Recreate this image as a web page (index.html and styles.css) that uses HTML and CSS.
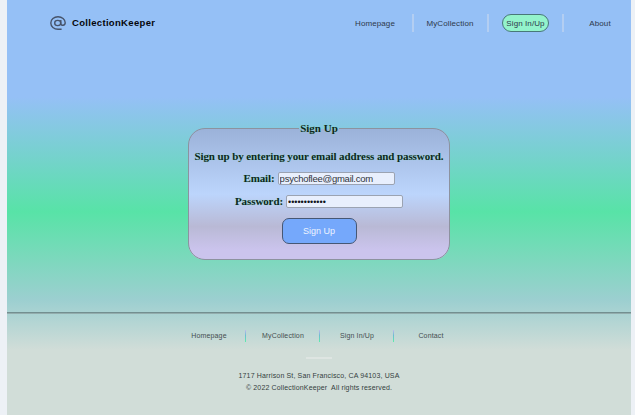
FILE: index.html
```html
<!DOCTYPE html>
<html lang="en">
<head>
<meta charset="utf-8">
<title>CollectionKeeper</title>
<link rel="stylesheet" href="styles.css">
</head>
<body>
<div class="page">
  <header class="header">
    <a class="brand">
      <svg class="logo" viewBox="0 0 16 14" fill="none" stroke="#46536a" stroke-width="1.4">
        <ellipse cx="7.7" cy="7" rx="3" ry="2.6"/>
        <path d="M10.8 4V7.6C10.8 10 15.2 10 15.2 6.8C15.2 3.3 12 .8 8 .8S.8 3.5.8 7S4 13.2 8 13.2H11.6"/>
      </svg>
      <span>CollectionKeeper</span>
    </a>
    <nav class="nav">
      <a><span>Homepage</span></a>
      <a><span>MyCollection</span></a>
      <a><span class="active">Sign In/Up</span></a>
      <a><span>About</span></a>
    </nav>
  </header>
  <main class="main">
    <fieldset class="card">
      <legend>Sign Up</legend>
      <p class="intro">Sign up by entering your email address and password.</p>
      <div class="row email"><label for="email">Email:</label><input id="email" type="text" value="psychoflee@gmail.com"></div>
      <div class="row"><label for="password">Password:</label><input id="password" type="password" value="abcdefghijkl"></div>
      <button class="submit">Sign Up</button>
    </fieldset>
  </main>
  <footer class="footer">
    <nav class="links">
      <a>Homepage</a>
      <a>MyCollection</a>
      <a>Sign In/Up</a>
      <a>Contact</a>
    </nav>
    <div class="dash"></div>
    <p>1717 Harrison St, San Francisco, CA 94103, USA</p>
    <p class="copy">© 2022 CollectionKeeper&nbsp; All rights reserved.</p>
  </footer>
</div>
</body>
</html>
```
FILE: styles.css
```css
* { box-sizing: border-box; }
body {
  margin: 0;
  background: #edf1f6;
  font-family: "Liberation Sans", Arial, sans-serif;
  overflow: hidden;
}
.page {
  width: 624px;
  height: 415px;
  margin-left: 7px;
  display: flex;
  flex-direction: column;
  background: linear-gradient(#95c0f6 0, #95c0f6 97px, #58e3a7 212px, #9ccfd0 300px, #d1ddd8 350px, #d1ddd8 100%);
}
.header {
  height: 46px;
  display: flex;
  align-items: center;
  justify-content: space-between;
  padding-left: 43px;
}
.brand {
  display: flex;
  align-items: center;
  gap: 6px;
  color: #05070c;
  font-size: 9.5px;
  font-weight: bold;
  letter-spacing: .32px;
}
.brand span { margin-top: -1px; }
.logo { width: 16px; height: 14px; }
.nav {
  display: grid;
  grid-template-columns: 75px 75px 75px 67px;
  font-size: 8px;
  letter-spacing: .1px;
  color: #2d394b;
}
.nav a {
  height: 18px;
  display: flex;
  align-items: center;
  justify-content: center;
  padding-right: 1px;
  border-right: 2px solid #b3cef2;
}
.nav a:last-child { border: 0; padding: 0 0 0 5px; }
.nav a:nth-child(3) { padding: 0; }
.active {
  width: 47px;
  height: 18px;
  line-height: 17px;
  text-align: center;
  border: 1px solid #487878;
  border-radius: 9px;
  background: #93f3cb;
}
.main { height: 266px; padding: 76px 0 0 181px; }
.card {
  width: 262px;
  height: 138px;
  margin: 0;
  padding: 0;
  border: 1px solid #8c929f;
  border-radius: 17px;
  background: linear-gradient(#9bb2d9, #bcd5fc 50%, #b9b9d5 75%, #cbc4ed 93%);
  text-align: center;
  font: bold 11px "Liberation Serif", "Times New Roman", serif;
  letter-spacing: -.1px;
  color: #0e261f;
  text-shadow: 0 0 1px #8de4bf;
}
.card legend { margin: 0 auto; padding: 0 1px; height: 12px; line-height: 12px; letter-spacing: 0; }
.intro { margin: 16px 0 0; line-height: 13px; white-space: nowrap; }
.row {
  display: flex;
  justify-content: center;
  align-items: center;
  gap: 3px;
  height: 13px;
  margin-top: 10px;
}
.email { margin-top: 9px; }
.row label { line-height: 13px; }
.row input {
  width: 117px;
  height: 13px;
  padding: 0 1px;
  border: 1px solid #9ba3b2;
  border-radius: 2px;
  background: #e8effd;
  color: #30343c;
  font: 9.5px "Liberation Sans", Arial, sans-serif;
  letter-spacing: -.25px;
}
.row input[type="password"] {
  padding-left: 1px;
  color: #11151c;
  font-size: 9px;
  letter-spacing: 0;
}
.submit {
  display: block;
  width: 75px;
  height: 26px;
  margin: 10px auto 0;
  padding: 0;
  border: 1px solid #465774;
  border-radius: 7px;
  background: #75a8fb;
  color: #edf4ff;
  font: 9px "Liberation Sans", Arial, sans-serif;
}
.footer {
  height: 103px;
  padding-top: 16px;
  border-top: 1px solid #738f90;
  box-shadow: inset 0 1px #93adad;
  text-align: center;
  color: #444e50;
  font-size: 7px;
  letter-spacing: .15px;
}
.links {
  display: grid;
  grid-template-columns: repeat(4, 74px);
  justify-content: center;
  padding-left: 2px;
  line-height: 13px;
}
.links a {
  height: 13px;
  background: linear-gradient(#c2b8ec, #6cbcd2 45%, #5ceeaa) right 0 top 1px / 1.5px 12px no-repeat;
}
.links a:last-child { background: none; }
.dash { width: 26px; height: 2px; margin: 15px auto 11px; background: #dee5e2; }
.footer p { margin: 0; line-height: 12px; color: #343d3e; }
```
